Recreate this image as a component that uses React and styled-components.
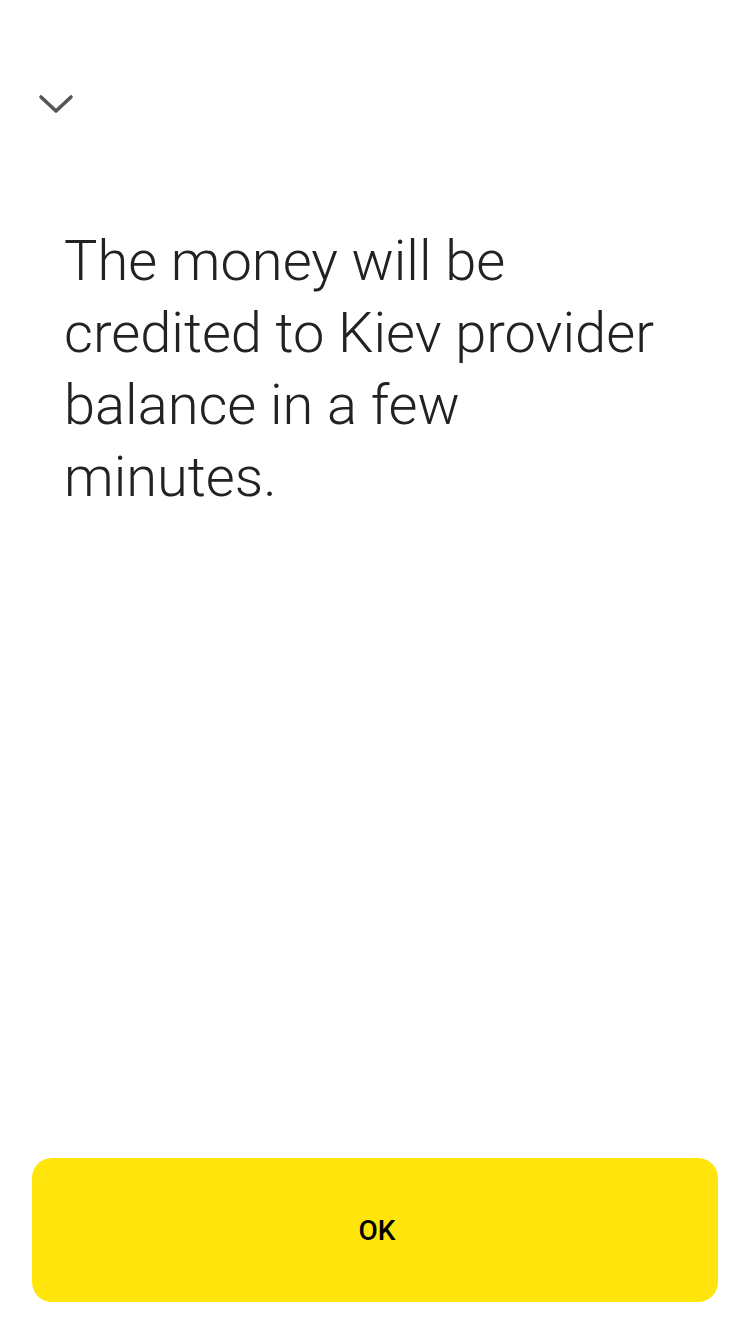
import React from 'react';
import styled, { createGlobalStyle } from 'styled-components';

const GlobalStyle = createGlobalStyle`
  html, body {
    margin: 0;
    padding: 0;
    background: #fff;
  }
  body {
    font-family: Roboto, "Noto Sans", sans-serif;
  }
`;

const Screen = styled.div`
  width: 750px;
  height: 1334px;
  display: flex;
  flex-direction: column;
  box-sizing: border-box;
  background: #fff;
`;

const TopBar = styled.div`
  height: 225px;
  padding: 88px 0 0 38px;
  box-sizing: border-box;
`;

const CloseButton = styled.button`
  border: none;
  background: none;
  padding: 0;
  width: 36px;
  height: 32px;
  display: flex;
  align-items: center;
  justify-content: center;
  cursor: pointer;
`;

const Message = styled.p`
  margin: 0;
  padding: 0 86px 0 64px;
  font-family: Roboto, sans-serif;
  font-weight: 300;
  font-size: 56px;
  line-height: 72px;
  color: #222;
  flex: 1;
`;

const Footer = styled.div`
  padding: 0 32px 32px;
`;

const OkButton = styled.button`
  width: 100%;
  height: 144px;
  border: none;
  border-radius: 20px;
  background: #ffe50c;
  color: #000;
  font-family: Roboto, sans-serif;
  font-weight: 500;
  font-size: 28px;
  padding: 0 0 0 4px;
  cursor: pointer;
`;

const App = () => (
  <>
    <GlobalStyle />
    <Screen>
      <TopBar>
        <CloseButton aria-label="Close">
          <svg width="36" height="20" viewBox="0 0 36 20">
            <path d="M3 3 L18 17 L33 3" fill="none" stroke="#555" strokeWidth="3.6" strokeLinecap="round" strokeLinejoin="round" />
          </svg>
        </CloseButton>
      </TopBar>
      <Message>The money will be credited to Kiev provider balance in a few minutes.</Message>
      <Footer>
        <OkButton>OK</OkButton>
      </Footer>
    </Screen>
  </>
);

export default App;
